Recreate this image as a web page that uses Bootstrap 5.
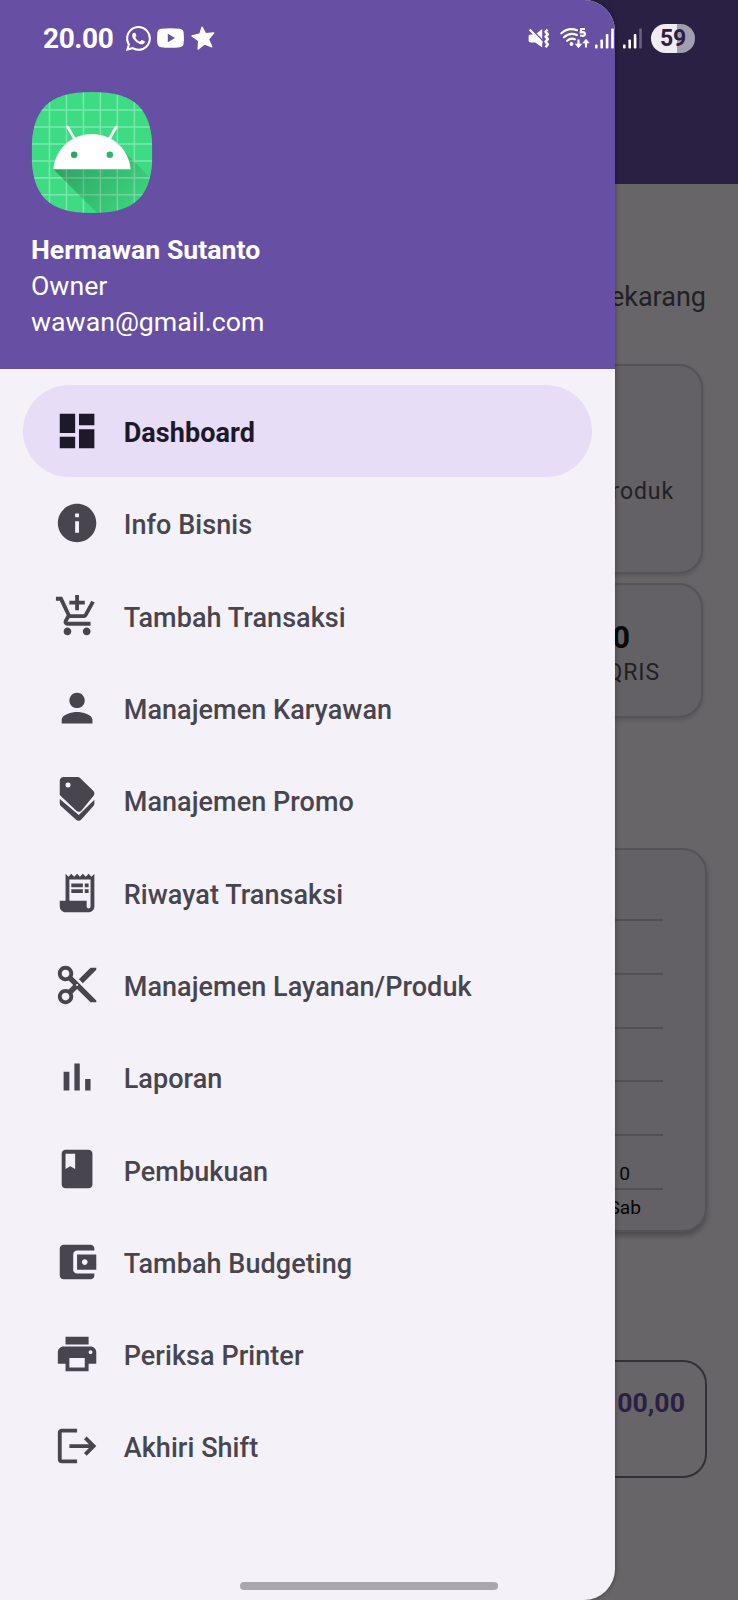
<!DOCTYPE html>
<html lang="id">
<head>
<meta charset="utf-8">
<meta name="viewport" content="width=device-width, initial-scale=1">
<title>Dashboard</title>
<link href="https://cdn.jsdelivr.net/npm/bootstrap@5.3.0/dist/css/bootstrap.min.css" rel="stylesheet">
<style>
  body { font-family: Roboto, sans-serif; font-size: 27px; background: #676568; color: #222024; }
  .screen { width: 738px; height: 1600px; }
  svg { display: block; flex: none; }

  /* status bar */
  .status { height: 76px; z-index: 3; color: #fff; padding-left: 43px; padding-right: 43px; }
  .clock { font-size: 28px; font-weight: 700; line-height: 32px; width: 83px; letter-spacing: -.4px; padding-top: 1px; }
  .battery { width: 44px; height: 29px; font-size: 23px; line-height: 30px; font-weight: 700; color: #2a2043;
    letter-spacing: -.3px; background: linear-gradient(90deg, #efedf2 58%, #a39eaf 58%); }
  .gap-youtube { margin-left: 6px; }
  .gap-star { margin-left: 7px; }
  .gap-wifi { margin-left: 11px; }
  .gap-sim1 { margin-left: 5px; }
  .gap-sim2 { margin-left: 8px; }

  /* dimmed dashboard behind the drawer */
  .appbar { height: 184px; background: #2a2043; }
  .dash { padding: 97px 32px 0 31px; }
  .now { line-height: 32px; margin-bottom: 51px; }
  .tile { background: #636165; border: 2px solid #555358; border-radius: 24px; box-shadow: 0 2px 4px rgba(0,0,0,.15); margin-right: 3px; }
  .tile-product { height: 210px; padding: 110px 27px 0; margin-bottom: 9px; }
  .tile-qris { height: 135px; padding: 34px 41px 0; margin-bottom: 130px; }
  .caption-text { font-size: 23px; line-height: 32px; letter-spacing: .9px; }
  .amount { font-size: 31px; font-weight: 700; line-height: 38px; padding-right: 30px; color: #0a0a0b; }
  .tile-chart { height: 384px; margin-right: -1px; padding: 69px 42px 0; margin-bottom: 128px; box-shadow: 0 4px 5px rgba(0,0,0,.25); }
  .gridrow { height: 53.8px; border-top: 2px solid #515054; }
  .chart-text { font-size: 19.2px; line-height: 30px; color: #060607; }
  .bar-value { right: 33px; top: -31px; }
  .day { padding: 3px 22px 0 0; }
  .total { height: 118px; margin-right: -1px; border: 2px solid #333135; border-radius: 24px; padding: 24px 20px 0; line-height: 34px; font-size: 26.7px; font-weight: 700; color: #2a2043; }

  /* drawer */
  .drawer { width: 615px; height: 1600px; background: #f4f1f9; border-radius: 0 31px 31px 0; z-index: 2; box-shadow: 0 0 5px rgba(0,0,0,.4); }
  .profile { height: 369px; background: #674fa3; padding: 92px 31px 0; font-size: 26.7px; line-height: 36.2px; }
  .profile svg { margin-bottom: 19px; }
  .menu { padding: 16px 23.3px 0; }
  .menu .nav-link { height: 92.3px; padding: 0 0 0 30.6px; gap: 23.7px; color: #48454e; font-weight: 500; border-radius: 47px; letter-spacing: .06px; }
  .menu .nav-link.active { background: #e7ddf6; color: #1d182a; font-weight: 700; }
  .menu .nav-link span { padding-top: 4px; line-height: 32px; }
  .menu svg { width: 46.15px; height: 46.15px; fill: currentColor; }
  .handle { width: 258px; height: 8px; left: 240px; top: 1582px; background: #a9a6ae; z-index: 3; }
</style>
</head>
<body>
<div class="screen position-relative overflow-hidden">

  <div class="status position-absolute top-0 start-0 w-100 d-flex align-items-center">
    <div class="clock">20.00</div>
    <svg width="25" height="25" viewBox="0 0 16 16" fill="#fff"><path d="M13.601 2.326A7.85 7.85 0 0 0 7.994 0C3.627 0 .068 3.558.064 7.926c0 1.399.366 2.76 1.057 3.965L0 16l4.204-1.102a7.9 7.9 0 0 0 3.79.965h.004c4.368 0 7.926-3.558 7.93-7.93A7.9 7.9 0 0 0 13.6 2.326zM7.994 14.521a6.6 6.6 0 0 1-3.356-.92l-.24-.144-2.494.654.666-2.433-.156-.251a6.56 6.56 0 0 1-1.007-3.505c0-3.626 2.957-6.584 6.591-6.584a6.56 6.56 0 0 1 4.66 1.931 6.56 6.56 0 0 1 1.928 4.66c-.004 3.639-2.961 6.592-6.592 6.592m3.615-4.934c-.197-.099-1.17-.578-1.353-.646-.182-.065-.315-.099-.445.099-.133.197-.513.646-.627.775-.114.133-.232.148-.43.05-.197-.1-.836-.308-1.592-.985-.59-.525-.985-1.175-1.103-1.372-.114-.198-.011-.304.088-.403.087-.088.197-.232.296-.346.1-.114.133-.198.198-.33.065-.134.034-.248-.015-.347-.05-.099-.445-1.076-.612-1.47-.16-.389-.323-.335-.445-.34-.114-.007-.247-.007-.38-.007a.73.73 0 0 0-.529.247c-.182.198-.691.677-.691 1.654s.71 1.916.81 2.049c.098.133 1.394 2.132 3.383 2.992.47.205.84.326 1.129.418.475.152.904.129 1.246.08.38-.058 1.171-.48 1.338-.943.164-.464.164-.86.114-.943-.049-.084-.182-.133-.38-.232"/></svg>
    <svg class="gap-youtube" width="27" height="20" viewBox="0 0 27 20"><path fill="#fff" fill-rule="evenodd" d="M4 .8Q13.500-.4 23 .8 26.300 1.200 26.600 4.500 27.200 10 26.600 15.500 26.300 18.800 23 19.200 13.500 20.400 4 19.200.7 18.800.4 15.500-.2 10 .4 4.500.7 1.200 4 .8zM10.800 5.800v8.400L18 10z"/></svg>
    <svg class="gap-star" width="24" height="24" viewBox="0 0 24 24"><path fill="#fff" stroke="#fff" stroke-width="1.400" stroke-linejoin="round" d="M11 1.200l3.600 6.600 8.200-.9-5.400 6.500 3.400 7.500-7.300-3L7.200 23l.5-8.300L1 9.900l8-1.900z"/></svg>

    <div class="ms-auto d-flex align-items-center">
      <svg width="21" height="21" viewBox="0 0 21 21"><path fill="#fff" d="M14.200 1v18.600L7.300 14.600H2.500Q.6 14.600.6 12.800V8.200Q.6 6.400 2.500 6.400h4.800z"/><path d="M3.200.8L15.300 13.500" stroke="#674fa3" stroke-width="1.500"/><path d="M1.700 1.500L14.200 14.700" stroke="#fff" stroke-width="2.200"/><path d="M19.600 1.500l-2 2.300 2.200 2.500-2.200 2.400 2.200 2.500-2.200 2.500 2.200 2.600-2.200 3" fill="none" stroke="#fff" stroke-width="2.500" stroke-linejoin="round"/></svg>
      <svg class="gap-wifi" width="30" height="22" viewBox="0 0 30 22"><g fill="none" stroke="#fff" stroke-width="2.200" stroke-linecap="round"><path d="M1.300 6.200Q8.500-.2 17 3.200M4 10.300Q9.800 4.900 16.800 8M7.200 13.800Q11 10.400 14.800 12.300"/><path stroke-linecap="butt" d="M18.500 12.500v6M26 20.500v-6"/><path stroke-linecap="butt" d="M25 2h-3.900l-.3 3.300q4.200-.7 4.200 1.700 0 2.600-4.900 1.500"/></g><path fill="#fff" d="M14.800 16.800h7.400l-3.700 4.500zM22.300 16.200h7.400L26 11.700z"/><circle cx="11.500" cy="17" r="1.900" fill="#fff"/></svg>
      <svg class="gap-sim1" width="20" height="21" viewBox="0 0 20 21" fill="#fff"><rect x="0" y="16.500" width="2.600" height="4" rx=".8"/><rect x="5.400" y="11.500" width="2.600" height="9" rx=".8"/><rect x="10.800" y="6" width="2.600" height="14.500" rx=".8"/><rect x="16.200" y=".5" width="2.600" height="20" rx=".8"/></svg>
      <svg class="gap-sim2" width="20" height="21" viewBox="0 0 20 21" fill="#fff"><rect x="0" y="16.500" width="2.600" height="4" rx=".8"/><rect x="5.400" y="11.500" width="2.600" height="9" rx=".8"/><rect x="10.800" y="6" width="2.600" height="14.500" rx=".8"/><rect x="16.200" y=".5" width="2.600" height="20" rx=".8" opacity=".3"/></svg>
      <div class="battery gap-sim2 rounded-pill text-center">59</div>
    </div>
  </div>

  <main>
    <div class="appbar"></div>
    <div class="dash text-end">
      <div class="now">Sekarang</div>
      <div class="tile tile-product caption-text">Produk</div>
      <div class="tile tile-qris">
        <div class="amount">0</div>
        <div class="caption-text">QRIS</div>
      </div>
      <div class="tile tile-chart">
        <div class="gridrow"></div>
        <div class="gridrow"></div>
        <div class="gridrow"></div>
        <div class="gridrow"></div>
        <div class="gridrow"></div>
        <div class="gridrow chart-text position-relative">
          <div class="bar-value position-absolute">0</div>
          <div class="day">Sab</div>
        </div>
      </div>
      <div class="total">00,00</div>
    </div>
  </main>

  <aside class="drawer position-absolute top-0 start-0 overflow-hidden">
    <header class="profile text-white">
      <svg width="122" height="121" viewBox="18 18 72 72">
        <defs>
          <clipPath id="squircle"><path d="M54 18C80 18 90 28 90 54S80 90 54 90 18 80 18 54 28 18 54 18z"/></clipPath>
          <linearGradient id="shade" gradientUnits="userSpaceOnUse" x1="42.950" y1="49.600" x2="85.850" y2="92.500"><stop offset="0" stop-color="#000" stop-opacity=".27"/><stop offset="1" stop-color="#000" stop-opacity="0"/></linearGradient>
        </defs>
        <g clip-path="url(#squircle)">
          <path fill="#3ddc84" d="M18 18h72v72H18z"/>
          <path stroke="#fff" stroke-opacity=".33" stroke-width=".9" d="M28.700 18v72M38.800 18v72M48.900 18v72M59 18v72M69.100 18v72M79.200 18v72M18 28.700h72M18 38.800h72M18 48.900h72M18 59h72M18 69.100h72M18 79.200h72"/>
          <path fill="url(#shade)" d="M31 63.928s6.400-11 12.100-13.100c7.200-2.600 26-1.400 26-1.400l38.100 38.100-.2 21.400-32-1z"/>
          <path fill="#fff" fill-rule="evenodd" d="M65.300 45.828l3.800-6.600c.2-.4.1-.9-.3-1.100-.4-.2-.9-.1-1.100.3l-3.900 6.700c-6.300-2.800-13.400-2.800-19.700 0l-3.900-6.700c-.2-.4-.7-.5-1.100-.3-.3.200-.4.700-.2 1.100l3.800 6.600C36.200 49.428 31.700 56.028 31 63.928h46c-.7-7.900-5.200-14.500-11.700-18.100zM43.400 57.328a1.950 1.950 0 1 1 0-3.900 1.950 1.950 0 0 1 0 3.900zM64.600 57.328a1.950 1.950 0 1 1 0-3.900 1.950 1.950 0 0 1 0 3.900z"/>
        </g>
      </svg>
      <div class="fw-bold">Hermawan Sutanto</div>
      <div>Owner</div>
      <div>wawan@gmail.com</div>
    </header>

    <nav class="menu nav flex-column">
      <a class="nav-link active d-flex align-items-center" href="#"><svg viewBox="0 0 24 24"><path d="M3 13h8V3H3v10zm0 8h8v-6H3v6zm10 0h8V11h-8v10zm0-18v6h8V3h-8z"/></svg><span>Dashboard</span></a>
      <a class="nav-link d-flex align-items-center" href="#"><svg viewBox="0 0 24 24"><path d="M12 2C6.480 2 2 6.480 2 12s4.480 10 10 10 10-4.480 10-10S17.520 2 12 2zm1 15h-2v-6h2v6zm0-8h-2V7h2v2z"/></svg><span>Info Bisnis</span></a>
      <a class="nav-link d-flex align-items-center" href="#"><svg viewBox="0 0 24 24"><path d="M11 9h2V6h3V4h-3V1h-2v3H8v2h3v3zm-4 9c-1.100 0-1.990.9-1.990 2S5.900 22 7 22s2-.9 2-2-.9-2-2-2zm10 0c-1.100 0-1.990.9-1.990 2s.89 2 1.990 2 2-.9 2-2-.9-2-2-2zm-8.900-5h7.450c.75 0 1.410-.41 1.750-1.030l3.860-7.010L19.420 4l-3.870 7H8.530L4.270 2H1v2h2l3.600 7.590-1.350 2.440C4.520 15.370 5.480 17 7 17h12v-2H7l1.100-2z"/></svg><span>Tambah Transaksi</span></a>
      <a class="nav-link d-flex align-items-center" href="#"><svg viewBox="0 0 24 24"><path d="M12 12c2.210 0 4-1.790 4-4s-1.790-4-4-4-4 1.790-4 4 1.790 4 4 4zm0 2c-2.670 0-8 1.340-8 4v2h16v-2c0-2.660-5.330-4-8-4z"/></svg><span>Manajemen Karyawan</span></a>
      <a class="nav-link d-flex align-items-center" href="#"><svg viewBox="0 0 24 24"><path fill-rule="evenodd" d="M5 0h7.200c.6 0 1.100.2 1.500.6l6.700 6.500c.8.8.8 2.100 0 2.900L14.200 17.500c-.7.8-1.800.8-2.600.1L3 9.300V2c0-1.100.9-2 2-2zm2.300 2.800a1.300 1.300 0 1 0 0 2.600 1.300 1.300 0 0 0 0-2.600zM3 11.500l9.900 8.300 8.100-8v2.100c0 .5-.2.900-.6 1.300l-6.200 6.900c-.7.800-1.900.8-2.700.1L3.700 15.200c-.5-.5-.7-.9-.7-1.600z"/></svg><span>Manajemen Promo</span></a>
      <a class="nav-link d-flex align-items-center" href="#"><svg viewBox="0 0 24 24"><path fill-rule="evenodd" d="M19.500 3.500L18 2l-1.500 1.500L15 2l-1.500 1.500L12 2l-1.500 1.500L9 2 7.500 3.500 6 2v14H3v3c0 1.660 1.340 3 3 3h12c1.660 0 3-1.340 3-3V2l-1.500 1.500zM19 19c0 .55-.45 1-1 1s-1-.45-1-1v-3H8V5h11v14z"/><path d="M9 7h6v2H9zM16 7h2v2h-2zM9 10h6v2H9zM16 10h2v2h-2z"/></svg><span>Riwayat Transaksi</span></a>
      <a class="nav-link d-flex align-items-center" href="#"><svg viewBox="0 0 24 24"><path d="M9.640 7.640c.23-.5.36-1.050.36-1.640 0-2.210-1.790-4-4-4S2 3.790 2 6s1.790 4 4 4c.59 0 1.140-.13 1.640-.36L10 12l-2.360 2.360C7.140 14.130 6.590 14 6 14c-2.210 0-4 1.790-4 4s1.790 4 4 4 4-1.790 4-4c0-.59-.13-1.140-.36-1.640L12 14l7 7h3v-1L9.640 7.640zM6 8c-1.100 0-2-.89-2-2s.9-2 2-2 2 .89 2 2-.9 2-2 2zm0 12c-1.100 0-2-.89-2-2s.9-2 2-2 2 .89 2 2-.9 2-2 2zm6-7.500c-.28 0-.5-.22-.5-.5s.22-.5.5-.5.5.22.5.5-.22.5-.5.5zM19 3l-6 6 2 2 7-7V3z"/></svg><span>Manajemen Layanan/Produk</span></a>
      <a class="nav-link d-flex align-items-center" href="#"><svg viewBox="0 0 24 24"><path d="M5 9.200h3V19H5zM10.600 5h2.800v14h-2.800zm5.600 8H19v6h-2.800z"/></svg><span>Laporan</span></a>
      <a class="nav-link d-flex align-items-center" href="#"><svg viewBox="0 0 24 24"><path fill-rule="evenodd" d="M18 2H6c-1.100 0-2 .9-2 2v16c0 1.100.9 2 2 2h12c1.100 0 2-.9 2-2V4c0-1.100-.9-2-2-2zM6 4h5v8l-2.500-1.500L6 12V4z"/></svg><span>Pembukuan</span></a>
      <a class="nav-link d-flex align-items-center" href="#"><svg viewBox="0 0 24 24"><path d="M21 18v1c0 1.100-.9 2-2 2H5c-1.110 0-2-.9-2-2V5c0-1.100.89-2 2-2h14c1.100 0 2 .9 2 2v1h-9c-1.110 0-2 .9-2 2v8c0 1.100.89 2 2 2h9zm-9-2h10V8H12v8zm4-2.500c-.83 0-1.500-.67-1.500-1.500s.67-1.500 1.500-1.500 1.500.67 1.500 1.500-.67 1.500-1.500 1.500z"/></svg><span>Tambah Budgeting</span></a>
      <a class="nav-link d-flex align-items-center" href="#"><svg viewBox="0 0 24 24"><path d="M19 8H5c-1.660 0-3 1.340-3 3v6h4v4h12v-4h4v-6c0-1.660-1.340-3-3-3zm-3 11H8v-5h8v5zm3-7c-.55 0-1-.45-1-1s.45-1 1-1 1 .45 1 1-.45 1-1 1zm-1-9H6v4h12V3z"/></svg><span>Periksa Printer</span></a>
      <a class="nav-link d-flex align-items-center" href="#"><svg viewBox="0 0 24 24"><path d="M17 7l-1.410 1.410L18.170 11H8v2h10.170l-2.580 2.580L17 17l5-5zM4 5h8V3H4c-1.100 0-2 .9-2 2v14c0 1.100.9 2 2 2h8v-2H4V5z"/></svg><span>Akhiri Shift</span></a>
    </nav>
  </aside>

  <div class="handle position-absolute rounded-pill"></div>
</div>
<script src="https://cdn.jsdelivr.net/npm/bootstrap@5.3.0/dist/js/bootstrap.bundle.min.js"></script>
</body>
</html>
